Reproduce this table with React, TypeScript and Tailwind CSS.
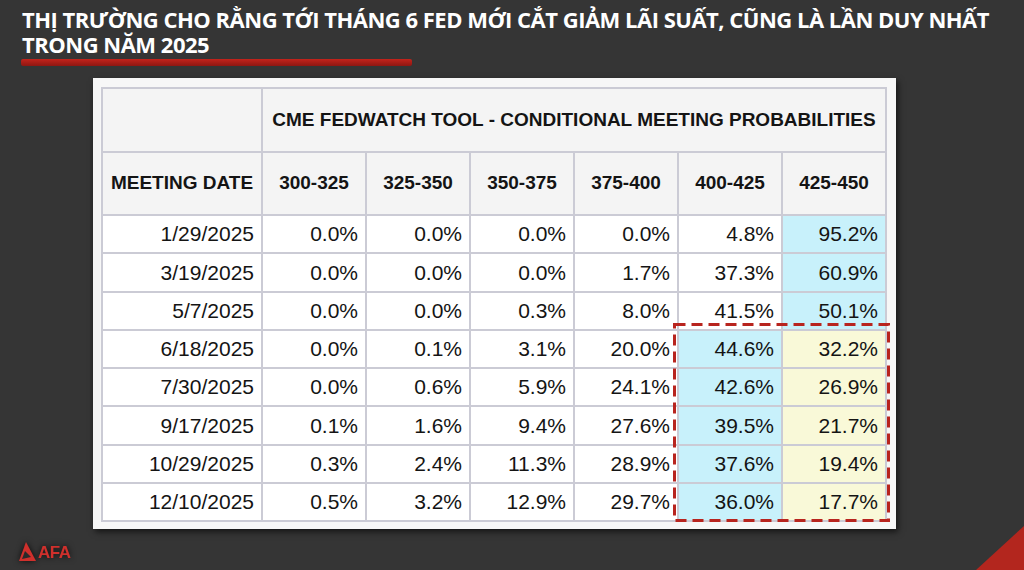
import React from "react";

type Tone = "w" | "b" | "y";

type Row = {
  date: string;
  values: string[];
  tones: Tone[];
};

const ranges = ["300-325", "325-350", "350-375", "375-400", "400-425", "425-450"];

const rows: Row[] = [
  { date: "1/29/2025", values: ["0.0%", "0.0%", "0.0%", "0.0%", "4.8%", "95.2%"], tones: ["w", "w", "w", "w", "w", "b"] },
  { date: "3/19/2025", values: ["0.0%", "0.0%", "0.0%", "1.7%", "37.3%", "60.9%"], tones: ["w", "w", "w", "w", "w", "b"] },
  { date: "5/7/2025", values: ["0.0%", "0.0%", "0.3%", "8.0%", "41.5%", "50.1%"], tones: ["w", "w", "w", "w", "w", "b"] },
  { date: "6/18/2025", values: ["0.0%", "0.1%", "3.1%", "20.0%", "44.6%", "32.2%"], tones: ["w", "w", "w", "w", "b", "y"] },
  { date: "7/30/2025", values: ["0.0%", "0.6%", "5.9%", "24.1%", "42.6%", "26.9%"], tones: ["w", "w", "w", "w", "b", "y"] },
  { date: "9/17/2025", values: ["0.1%", "1.6%", "9.4%", "27.6%", "39.5%", "21.7%"], tones: ["w", "w", "w", "w", "b", "y"] },
  { date: "10/29/2025", values: ["0.3%", "2.4%", "11.3%", "28.9%", "37.6%", "19.4%"], tones: ["w", "w", "w", "w", "b", "y"] },
  { date: "12/10/2025", values: ["0.5%", "3.2%", "12.9%", "29.7%", "36.0%", "17.7%"], tones: ["w", "w", "w", "w", "b", "y"] },
];

const toneClass: Record<Tone, string> = {
  w: "bg-white",
  b: "bg-[#c8f1fb]",
  y: "bg-[#f9f9d8]",
};

function Logo() {
  return (
    <div className="flex items-end gap-[1px] [filter:drop-shadow(0_0_3px_rgba(0,0,0,0.8))]">
      <svg width="18" height="19" viewBox="0 0 18 19">
        <polygon points="7,0 17,19 0,19" fill="#d0302c" />
        <polygon points="6,9 12,15 3,17" fill="#2a2a2a" />
      </svg>
      <span className="font-['Liberation_Sans',Arial,sans-serif] text-[17px] font-bold leading-[17px] tracking-[-0.5px] text-[#d0302c]">
        AFA
      </span>
    </div>
  );
}

export default function App() {
  return (
    <div className="relative h-[570px] w-[1024px] overflow-hidden bg-[#353535]">
      {/* title */}
      <div className="pl-[22px] pt-[7px]">
        <h1 className="whitespace-nowrap font-['Open_Sans',sans-serif] text-[22px] font-bold leading-[25px] tracking-[-0.5px] text-white">
          THỊ TRƯỜNG CHO RẰNG TỚI THÁNG 6 FED MỚI CẮT GIẢM LÃI SUẤT, CŨNG LÀ LẦN DUY NHẤT
          <br />
          TRONG NĂM 2025
        </h1>
      </div>
      <div className="ml-[21px] mt-[2px] h-[7px] w-[391px] rounded-[2px] bg-gradient-to-b from-[#c4231b] to-[#8e1712]" />

      {/* table panel */}
      <div className="relative ml-[93px] mt-[12px] h-[451px] w-[803px] bg-[#f7f7f7] pl-[8px] pt-[9px] shadow-[2px_3px_6px_rgba(0,0,0,0.6)]">
        <div className="grid w-[786px] grid-cols-[158px_repeat(6,1fr)] grid-rows-[62px_61px_repeat(8,36.25px)] gap-[2px] bg-[#cbcbd5] p-[2px] font-['Liberation_Sans',Arial,sans-serif] text-[#141414]">
          <div className="bg-[#f4f4f4]" />
          <div className="col-span-6 flex items-center justify-center bg-[#f4f4f4] text-[19px] font-bold">
            CME FEDWATCH TOOL - CONDITIONAL MEETING PROBABILITIES
          </div>
          <div className="flex items-center justify-center bg-[#f4f4f4] text-[19px] font-bold">MEETING DATE</div>
          {ranges.map((r) => (
            <div key={r} className="flex items-center justify-center bg-[#f4f4f4] text-[19px] font-bold">
              {r}
            </div>
          ))}
          {rows.map((row) => (
            <React.Fragment key={row.date}>
              <div className="flex items-center justify-end bg-white pr-[7px] text-[21px]">{row.date}</div>
              {row.values.map((v, i) => (
                <div key={i} className={`flex items-center justify-end pr-[7px] text-[21px] ${toneClass[row.tones[i]]}`}>
                  {v}
                </div>
              ))}
            </React.Fragment>
          ))}
        </div>

        {/* highlight box */}
        <svg className="absolute left-[580px] top-[245px]" width="217" height="199" viewBox="0 0 217 199">
          <rect x="1.5" y="1.5" width="214" height="196" fill="none" stroke="#b8241e" strokeWidth="3" strokeDasharray="11 6" />
        </svg>
      </div>

      {/* logo */}
      <div className="absolute left-[19px] top-[542px]">
        <Logo />
      </div>

      {/* corner accent */}
      <svg className="absolute bottom-0 right-0" width="48" height="44" viewBox="0 0 48 44">
        <polygon points="48,0 48,44 0,44" fill="#b3261e" />
      </svg>
    </div>
  );
}
